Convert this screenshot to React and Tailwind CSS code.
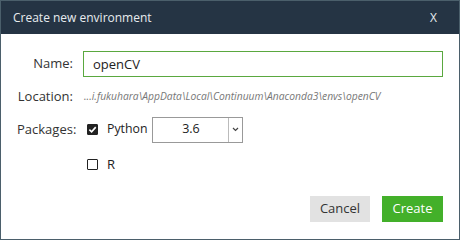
import { useState } from "react";

const font = { fontFamily: '"Open Sans", "DejaVu Sans", sans-serif' };

const Check = ({ checked }) => (
  <span
    className={`flex h-[11px] w-[11px] items-center justify-center rounded-[1px] border-[1.5px] border-[#222] ${
      checked ? "bg-[#222]" : "bg-white"
    }`}
  >
    {checked && (
      <svg width="9" height="9" viewBox="0 0 10 10">
        <path d="M1.5 5.2 L4 7.6 L8.6 2.4" stroke="#fff" strokeWidth="1.8" fill="none" />
      </svg>
    )}
  </span>
);

export default function App() {
  const [name, setName] = useState("openCV");
  const [python, setPython] = useState(true);
  const [r, setR] = useState(false);

  return (
    <div
      className="flex h-[240px] w-[460px] flex-col border border-[#4b5f6b] bg-white text-[13px] text-[#333]"
      style={font}
    >
      <div className="flex h-[33px] items-center justify-between bg-[#253444] pl-[12px] pr-[22px] text-[12px] text-[#e8ecef]">
        <span>Create new environment</span>
        <span className="text-[12px]">X</span>
      </div>

      <div className="flex flex-1 flex-col pl-[16px] pr-[16px]">
        <div className="mt-[17px] flex items-center">
          <span className="w-[56px] shrink-0 text-right">Name:</span>
          <input
            autoFocus
            value={name}
            onChange={(e) => setName(e.target.value)}
            className="ml-[10px] h-[26px] flex-1 border border-[#5aa83f] px-[9px] text-[13px] text-[#222] caret-[#222] outline-none"
          />
        </div>

        <div className="mt-[10px] flex items-center">
          <span className="w-[56px] shrink-0 text-right">Location:</span>
          <span className="ml-[11px] text-[10.3px] italic text-[#777]">
            ...i.fukuhara\AppData\Local\Continuum\Anaconda3\envs\openCV
          </span>
        </div>

        <div className="mt-[10px] flex items-center">
          <span className="w-[56px] shrink-0 text-right">Packages:</span>
          <button onClick={() => setPython(!python)} className="ml-[14px] flex items-center">
            <Check checked={python} />
            <span className="ml-[9px] text-[12.3px] text-[#222]">Python</span>
          </button>
          <div className="ml-[5px] flex h-[26px] w-[91px] shrink-0 items-center border border-[#999]">
            <span className="flex-1 text-center text-[12.5px] text-[#222]">3.6</span>
            <span className="flex h-full w-[14px] items-center justify-center border-l border-[#bbb]">
              <svg width="7" height="5" viewBox="0 0 7 5">
                <path d="M1 1 L3.5 3.5 L6 1" stroke="#444" strokeWidth="1.2" fill="none" />
              </svg>
            </span>
          </div>
        </div>

        <button onClick={() => setR(!r)} className="ml-[70px] mt-[12px] flex items-center">
          <Check checked={r} />
          <span className="ml-[9px] text-[#222]">R</span>
        </button>

        <div className="mt-auto mb-[17px] flex justify-end gap-[12px]">
          <button className="h-[26px] w-[60px] bg-[#e2e2e2] text-[#333]">Cancel</button>
          <button className="h-[26px] w-[61px] bg-[#43b02a] text-white">Create</button>
        </div>
      </div>
    </div>
  );
}
